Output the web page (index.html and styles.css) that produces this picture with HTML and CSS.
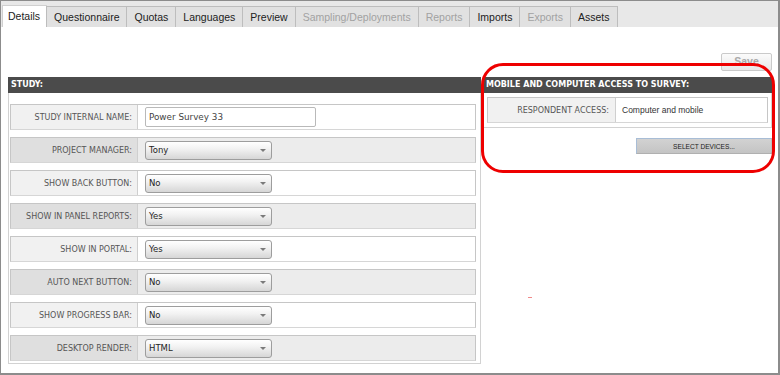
FILE: index.html
```html
<!DOCTYPE html>
<html lang="en">
<head>
<meta charset="utf-8">
<title>Study Details</title>
<link rel="stylesheet" href="styles.css">
</head>
<body>
<div class="frame">
  <nav class="tabs">
    <span class="tab tab-active">Details</span>
    <span class="tab">Questionnaire</span>
    <span class="tab">Quotas</span>
    <span class="tab">Languages</span>
    <span class="tab">Preview</span>
    <span class="tab tab-disabled">Sampling/Deployments</span>
    <span class="tab tab-disabled">Reports</span>
    <span class="tab">Imports</span>
    <span class="tab tab-disabled">Exports</span>
    <span class="tab">Assets</span>
  </nav>
  <main class="content">
    <div class="toolbar"><button class="save-btn" disabled>Save</button></div>
    <div class="panels">
      <section class="panel panel-study">
        <h2 class="panel-head">STUDY:</h2>
        <div class="panel-body study-body">
          <div class="row row-light">
            <div class="row-label">STUDY INTERNAL NAME:</div>
            <div class="row-value"><span class="text-input">Power Survey 33</span></div>
          </div>
          <div class="row row-dark">
            <div class="row-label">PROJECT MANAGER:</div>
            <div class="row-value"><span class="select">Tony<i class="caret"></i></span></div>
          </div>
          <div class="row row-light">
            <div class="row-label">SHOW BACK BUTTON:</div>
            <div class="row-value"><span class="select">No<i class="caret"></i></span></div>
          </div>
          <div class="row row-dark">
            <div class="row-label">SHOW IN PANEL REPORTS:</div>
            <div class="row-value"><span class="select">Yes<i class="caret"></i></span></div>
          </div>
          <div class="row row-light">
            <div class="row-label">SHOW IN PORTAL:</div>
            <div class="row-value"><span class="select">Yes<i class="caret"></i></span></div>
          </div>
          <div class="row row-dark">
            <div class="row-label">AUTO NEXT BUTTON:</div>
            <div class="row-value"><span class="select">No<i class="caret"></i></span></div>
          </div>
          <div class="row row-light">
            <div class="row-label">SHOW PROGRESS BAR:</div>
            <div class="row-value"><span class="select">No<i class="caret"></i></span></div>
          </div>
          <div class="row row-dark">
            <div class="row-label">DESKTOP RENDER:</div>
            <div class="row-value"><span class="select">HTML<i class="caret"></i></span></div>
          </div>
        </div>
      </section>
      <section class="panel panel-access">
        <h2 class="panel-head">MOBILE AND COMPUTER ACCESS TO SURVEY:</h2>
        <div class="panel-body access-body">
          <div class="row row-light access-row">
            <div class="row-label access-label">RESPONDENT ACCESS:</div>
            <div class="row-value access-value">Computer and mobile</div>
          </div>
        </div>
        <div class="devices-bar"><button class="devices-btn">SELECT DEVICES...</button></div>
      </section>
    </div>
  </main>
  <div class="annotation"></div>
  <span class="speck"></span>
</div>
</body>
</html>
```
FILE: styles.css
```css
html, body {
  margin: 0;
  padding: 0;
  background: #ffffff;
}

.frame {
  position: relative;
  width: 780px;
  height: 375px;
  box-sizing: border-box;
  border-top: 1px solid #8c8c8c;
  border-left: 1px solid #8c8c8c;
  border-right: 2px solid #8c8c8c;
  border-bottom: 2px solid #8c8c8c;
  overflow: hidden;
  background: #ffffff;
}

/* ---------- tabs ---------- */
.tabs {
  display: flex;
  align-items: flex-end;
  height: 26px;
  padding-left: 1px;
  background: #e8e8e8;
}

.tab {
  height: 20px;
  line-height: 20px;
  padding: 0 7px;
  border: 1px solid #bdbdbd;
  border-bottom: none;
  margin-right: -1px;
  background: #e1e1e1;
  font-family: "Liberation Sans", Arial, sans-serif;
  font-size: 10.5px;
  color: #222222;
  white-space: nowrap;
}

.tab-active {
  height: 21px;
  line-height: 21px;
  padding: 0 6px 0 5px;
  background: #ffffff;
  border-color: #d0d0d0;
}

.tab-disabled {
  color: #a2a2a2;
}

/* ---------- content ---------- */
.content {
  padding: 26px 6px 0 7px;
}

.toolbar {
  display: flex;
  justify-content: flex-end;
  height: 18px;
}

.save-btn {
  width: 51px;
  height: 18px;
  padding: 0 0 3px;
  border: 1px solid #cacaca;
  border-radius: 2px;
  background: linear-gradient(#fbfbfb, #e8e8e8);
  color: #a9a9a9;
  font-family: "Liberation Sans", Arial, sans-serif;
  font-weight: bold;
  font-size: 10.5px;
}

.panels {
  display: flex;
  gap: 2px;
  margin-top: 6px;
}

.panel-study {
  width: 473px;
}

.panel-access {
  width: 289px;
}

.panel-head {
  margin: 0;
  height: 16px;
  line-height: 16px;
  padding-left: 3px;
  background: #4b4b4b;
  color: #ffffff;
  font-family: "DejaVu Sans", Verdana, sans-serif;
  font-weight: bold;
  font-size: 8px;
  white-space: nowrap;
}

.panel-body {
  border: 1px solid #d2d2d2;
  border-top: none;
}

.study-body {
  display: flex;
  flex-direction: column;
  gap: 7px;
  padding: 11px 4px 2px 1px;
}

/* ---------- rows ---------- */
.row {
  display: flex;
  height: 26px;
  box-sizing: border-box;
  border: 1px solid #c6c6c6;
  border-bottom-color: #d6d6d6;
}

.row-label {
  width: 127px;
  box-sizing: border-box;
  display: flex;
  align-items: center;
  justify-content: flex-end;
  padding-right: 5px;
  border-right: 1px solid #cfcfcf;
  font-family: "DejaVu Sans", Verdana, sans-serif;
  font-size: 8px;
  color: #565656;
  white-space: nowrap;
}

.row-value {
  flex: 1;
  display: flex;
  align-items: center;
  padding-left: 7px;
}

.row-light .row-label { background: #f1f1f1; }
.row-light .row-value { background: #ffffff; }
.row-dark .row-label { background: #dfdfdf; }
.row-dark .row-value { background: #ececec; }

.text-input {
  width: 171px;
  height: 20px;
  box-sizing: border-box;
  display: flex;
  align-items: center;
  padding-left: 3px;
  border: 1px solid #b9b9b9;
  border-radius: 2px;
  background: #ffffff;
  font-family: "DejaVu Sans", Verdana, sans-serif;
  font-size: 8.8px;
  color: #444444;
}

.select {
  position: relative;
  width: 127px;
  height: 19px;
  box-sizing: border-box;
  display: flex;
  align-items: center;
  padding-left: 3px;
  border: 1px solid #9d9d9d;
  border-radius: 3px;
  background: linear-gradient(#ffffff, #f2f2f2 40%, #d6d6d6);
  font-family: "DejaVu Sans", Verdana, sans-serif;
  font-size: 8.5px;
  color: #1e1e1e;
}

.caret {
  position: absolute;
  right: 5px;
  top: 7px;
  width: 0;
  height: 0;
  border-left: 3px solid transparent;
  border-right: 3px solid transparent;
  border-top: 3px solid #7a7a7a;
}

/* ---------- access panel ---------- */
.access-body {
  padding: 4px 3px 4px 3px;
}

.access-label {
  width: 128px;
  padding-right: 6px;
}

.access-value {
  padding-left: 6px;
  font-family: "Liberation Sans", Arial, sans-serif;
  font-size: 8.5px;
  color: #333333;
}

.devices-bar {
  display: flex;
  justify-content: flex-end;
  margin-top: 10px;
}

.devices-btn {
  width: 136px;
  height: 16px;
  padding: 0;
  border: 1px solid #a8bdd6;
  border-right-color: #bdbdbd;
  border-bottom-color: #b0b0b0;
  background: linear-gradient(#d2d2d2, #c4c4c4);
  font-family: "Liberation Sans", Arial, sans-serif;
  font-size: 6.6px;
  color: #1c1c1c;
}

/* ---------- overlays ---------- */
.annotation {
  position: absolute;
  left: 480px;
  top: 62px;
  width: 294px;
  height: 110px;
  box-sizing: border-box;
  border: 3px solid #ee0000;
  border-radius: 22px;
  pointer-events: none;
}

.speck {
  position: absolute;
  left: 527px;
  top: 296px;
  width: 4px;
  height: 1px;
  background: #f08a8a;
}
```
